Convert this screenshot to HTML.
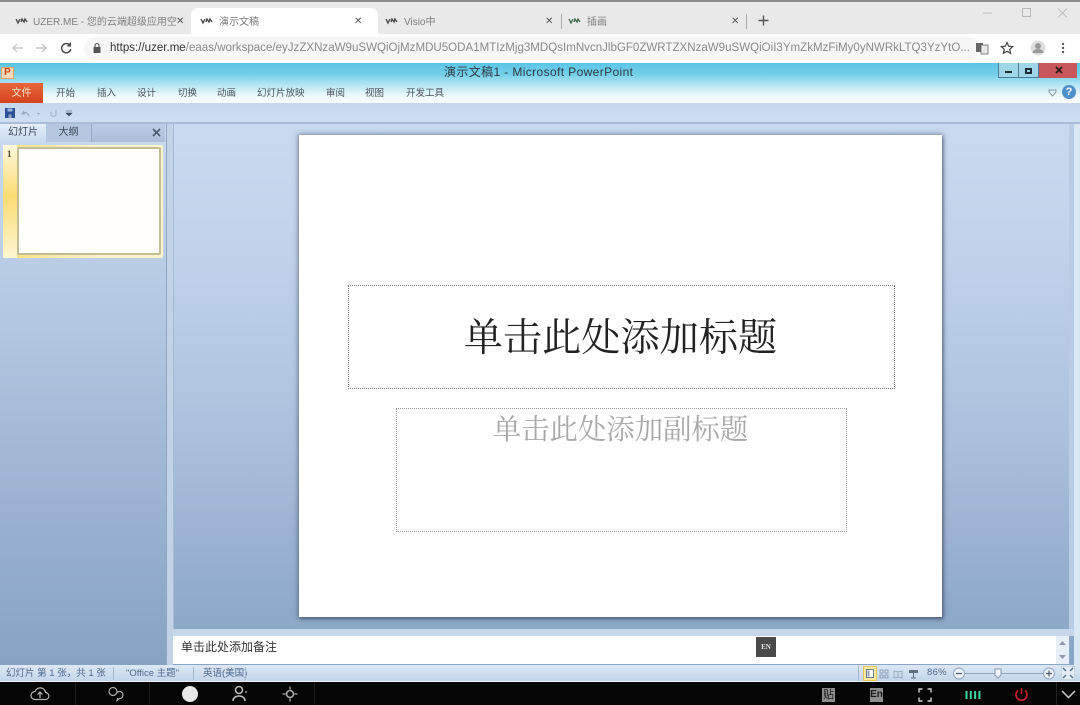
<!DOCTYPE html>
<html lang="zh">
<head>
<meta charset="utf-8">
<title>演示文稿1</title>
<style>
html,body{margin:0;padding:0;width:1080px;height:705px;overflow:hidden;background:#fff}
body{position:relative;font-family:"Liberation Sans","Noto Sans CJK SC",sans-serif;color:#444;filter:blur(.3px)}
.a{position:absolute;white-space:nowrap}
.tab{font-size:10px;color:#808080;top:16px;line-height:13px}
.x{font-size:10px;color:#555;top:14px;line-height:15px}
.rib{font-size:9.5px;color:#4a5260;top:88px;line-height:12px}
.st{font-size:9.5px;color:#50688a;top:668px;line-height:12px}
.logo{top:17px}
</style>
</head>
<body>
<!-- Browser chrome -->
<div class="a" style="left:0;top:0;width:1080px;height:34px;background:#e9e9ea"></div>
<div class="a" style="left:0;top:0;width:1080px;height:2px;background:#8d8d8d"></div>
<div class="a" style="left:191px;top:8px;width:187px;height:26px;background:#fff;border-radius:7px 7px 0 0"></div>
<div class="a" style="left:0;top:34px;width:1080px;height:29px;background:#fff"></div>
<div class="a" style="left:84px;top:37px;width:896px;height:23px;background:#f6f6f7;border-radius:12px"></div>

<svg class="a logo" style="left:15px" width="14" height="8" viewBox="0 0 14 8"><path d="M1 2l2 4 2-4M6 5l1-3 2 3 1-3 2 3" fill="none" stroke="#444" stroke-width="1.3"/></svg>
<div class="a tab" style="left:33px">UZER.ME - 您的云端超级应用空</div>
<div class="a x" style="left:176px">✕</div>
<svg class="a logo" style="left:200px" width="14" height="8" viewBox="0 0 14 8"><path d="M1 2l2 4 2-4M6 5l1-3 2 3 1-3 2 3" fill="none" stroke="#444" stroke-width="1.3"/></svg>
<div class="a tab" style="left:219px;color:#777">演示文稿</div>
<div class="a x" style="left:354px">✕</div>
<svg class="a logo" style="left:385px" width="14" height="8" viewBox="0 0 14 8"><path d="M1 2l2 4 2-4M6 5l1-3 2 3 1-3 2 3" fill="none" stroke="#444" stroke-width="1.3"/></svg>
<div class="a tab" style="left:404px">Visio中</div>
<div class="a x" style="left:545px">✕</div>
<div class="a" style="left:561px;top:14px;width:1px;height:15px;background:#aaa"></div>
<svg class="a logo" style="left:568px" width="14" height="8" viewBox="0 0 14 8"><path d="M1 2l2 4 2-4M6 5l1-3 2 3 1-3 2 3" fill="none" stroke="#3c6a4a" stroke-width="1.3"/></svg>
<div class="a tab" style="left:587px">插画</div>
<div class="a x" style="left:731px">✕</div>
<div class="a" style="left:746px;top:14px;width:1px;height:15px;background:#aaa"></div>
<svg class="a" style="left:757px;top:14px" width="13" height="13" viewBox="0 0 13 13"><path d="M6.5 1.5v10M1.5 6.5h10" stroke="#555" stroke-width="1.4"/></svg>
<!-- window buttons -->
<svg class="a" style="left:980px;top:6px" width="90" height="14" viewBox="0 0 90 14"><path d="M3 7h9" stroke="#c4c4c4" stroke-width="1"/><rect x="42.5" y="2.5" width="8" height="8" fill="none" stroke="#b8b8b8"/><path d="M78 2.5l9 9M87 2.5l-9 9" stroke="#bdbdbd"/></svg>
<!-- nav icons -->
<svg class="a" style="left:10px;top:40px" width="64" height="16" viewBox="0 0 64 16"><path d="M3 8h10M3 8l4-4M3 8l4 4" fill="none" stroke="#bcbcbc" stroke-width="1.2"/><path d="M26 8h10M36 8l-4-4M36 8l-4 4" fill="none" stroke="#bcbcbc" stroke-width="1.2"/><path d="M60 5.5a4.6 4.6 0 1 0 .8 3.5" fill="none" stroke="#444" stroke-width="1.4"/><path d="M61 2v4.500h-4.500z" fill="#444"/></svg>
<svg class="a" style="left:92px;top:42px" width="10" height="12" viewBox="0 0 10 12"><rect x="1.500" y="5" width="7" height="6" fill="#555"/><path d="M3 5V3.500a2 2 0 0 1 4 0V5" fill="none" stroke="#555" stroke-width="1.100"/></svg>
<div class="a" style="left:110px;top:40px;font-size:11.55px;line-height:16px;color:#8a8a8a"><span style="color:#333">https://uzer.me</span>/eaas/workspace/eyJzZXNzaW9uSWQiOjMzMDU5ODA1MTIzMjg3MDQsImNvcnJlbGF0ZWRTZXNzaW9uSWQiOiI3YmZkMzFiMy0yNWRkLTQ3YzYtO...</div>
<svg class="a" style="left:975px;top:41px" width="14" height="14" viewBox="0 0 14 14"><rect x="1" y="2" width="7" height="9" fill="#666"/><rect x="6" y="4" width="7" height="9" fill="#e8e8e8" stroke="#666" stroke-width=".8"/></svg>
<svg class="a" style="left:1000px;top:41px" width="14" height="14" viewBox="0 0 14 14"><path d="M7 1.500l1.700 3.700 4 .4-3 2.700.9 4L7 10.300l-3.600 2 .9-4-3-2.700 4-.4z" fill="none" stroke="#444" stroke-width="1.200"/></svg>
<svg class="a" style="left:1030px;top:40px" width="16" height="16" viewBox="0 0 16 16"><circle cx="8" cy="8" r="7.500" fill="#dedede"/><circle cx="8" cy="6" r="3" fill="#9a9a9a"/><path d="M2.500 13a5.500 4 0 0 1 11 0z" fill="#9a9a9a"/></svg>
<svg class="a" style="left:1061px;top:42px" width="4" height="12" viewBox="0 0 4 12"><circle cx="2" cy="2" r="1.200" fill="#555"/><circle cx="2" cy="6" r="1.200" fill="#555"/><circle cx="2" cy="10" r="1.200" fill="#555"/></svg>

<!-- PowerPoint title & ribbon tabs -->
<div class="a" style="left:0;top:63px;width:1080px;height:40px;background:linear-gradient(#5dc5e6 0,#72cfe9 28%,#b5e5f3 55%,#eef9fc 82%,#fafdfe 100%)"></div>
<div class="a" style="left:1px;top:67px;width:13px;height:12px;background:#f3d9b8;border:1px solid #e1a26f;box-sizing:border-box;color:#c9471f;font-size:10px;font-weight:bold;line-height:10px;text-align:center">P</div>
<div class="a" style="left:444px;top:65px;font-size:12px;letter-spacing:.38px;line-height:15px;color:#2e3a44">演示文稿1 - Microsoft PowerPoint</div>
<div class="a" style="left:998px;top:63px;width:21px;height:15px;border:1px solid #4d7d96;border-top:0;box-sizing:border-box;background:#9ed6e8"></div>
<div class="a" style="left:1019px;top:63px;width:20px;height:15px;border:1px solid #4d7d96;border-top:0;border-left:0;box-sizing:border-box;background:#9ed6e8"></div>
<div class="a" style="left:1039px;top:63px;width:38px;height:15px;background:#c9565c"></div>
<div class="a" style="left:1005px;top:71px;width:7px;height:2px;background:#1e2a36"></div>
<div class="a" style="left:1025px;top:68px;width:7px;height:6px;border:2px solid #1e2a36;box-sizing:border-box"></div>
<svg class="a" style="left:1055px;top:66px" width="8" height="8" viewBox="0 0 8 8"><path d="M1 1l6 6M7 1L1 7" stroke="#2a1a1a" stroke-width="1.800"/></svg>

<div class="a" style="left:0;top:83px;width:43px;height:20px;background:linear-gradient(#e8663a,#d4431c);color:#f6e0c8;font-size:10px;line-height:22px;text-align:center">文件</div>
<div class="a rib" style="left:56px">开始</div>
<div class="a rib" style="left:97px">插入</div>
<div class="a rib" style="left:137px">设计</div>
<div class="a rib" style="left:178px">切换</div>
<div class="a rib" style="left:217px">动画</div>
<div class="a rib" style="left:257px">幻灯片放映</div>
<div class="a rib" style="left:326px">审阅</div>
<div class="a rib" style="left:365px">视图</div>
<div class="a rib" style="left:406px">开发工具</div>
<svg class="a" style="left:1048px;top:89px" width="9" height="8" viewBox="0 0 9 8"><path d="M1 1h7v2L4.500 7 1 3z" fill="none" stroke="#8898a8"/></svg>
<div class="a" style="left:1062px;top:85px;width:14px;height:14px;border-radius:50%;background:#4f8fcb;color:#fff;font-size:11px;font-weight:bold;line-height:14px;text-align:center">?</div>

<!-- Quick access -->
<div class="a" style="left:0;top:103px;width:1080px;height:20px;background:linear-gradient(#c6d7ee,#cfdff3)"></div>
<div class="a" style="left:0;top:122px;width:1080px;height:2px;background:#a9bdd6"></div>
<svg class="a" style="left:4px;top:107px" width="72" height="13" viewBox="0 0 72 13"><rect x="1" y="1" width="10" height="10" fill="#2b4f9a"/><rect x="3.500" y="1.500" width="5" height="3" fill="#9fb4dc"/><rect x="4.500" y="7.500" width="3" height="3.500" fill="#8fa4cc"/><path d="M20 4l-2 3h3M18.500 6.500a4 4 0 0 1 6.500 3" fill="none" stroke="#99a6ba" stroke-width="1.100"/><path d="M33 6h3l-1.500 2z" fill="#9aa6ba"/><path d="M52 3v5a3 3 0 0 1-5 0V5" fill="none" stroke="#a4b0c4" stroke-width="1.100"/><path d="M62 4h6M62 6h6l-3 3z" fill="#3c4a60" stroke="#3c4a60" stroke-width=".6"/></svg>

<!-- Workspace -->
<div class="a" style="left:0;top:124px;width:1080px;height:541px;background:linear-gradient(#c9daf0,#c0d2ea 25%,#a9bfdb 60%,#8fa9c9 90%,#8aa4c5)"></div>

<!-- Left pane -->
<div class="a" style="left:0;top:142px;width:166px;height:523px;background:linear-gradient(#c8d9ee,#b8cce4 25%,#a1b8d5 60%,#87a2c3)"></div>
<div class="a" style="left:0;top:124px;width:165px;height:18px;background:linear-gradient(#bccee5,#a9bdd7)"></div>
<div class="a" style="left:0;top:124px;width:46px;height:18px;background:linear-gradient(#e6eef8,#c8d9ee);color:#3a4656;font-size:10px;line-height:18px;text-align:center">幻灯片</div>
<div class="a" style="left:46px;top:124px;width:46px;height:18px;border-right:1px solid #97abc5;box-sizing:border-box;background:#b5c8e0;color:#3a4656;font-size:10px;line-height:18px;text-align:center">大纲</div>
<svg class="a" style="left:152px;top:128px" width="9" height="9" viewBox="0 0 9 9"><path d="M1 1l7 7M8 1L1 8" stroke="#4b5a6e" stroke-width="1.600"/></svg>
<div class="a" style="left:3px;top:145px;width:160px;height:113px;background:linear-gradient(90deg,#fbe28a 0,#fbe28a 10%,#f9f3cf 60%);border-radius:2px"></div>
<div class="a" style="left:3px;top:145px;width:14px;height:113px;background:linear-gradient(#fdf8dc,#fbdc74 45%,#fdf6d0)"></div>
<div class="a" style="left:7px;top:149px;font:bold 9px/11px 'Liberation Serif',serif;color:#4a4a30">1</div>
<div class="a" style="left:17px;top:147px;width:144px;height:108px;box-sizing:border-box;background:#fffefb;border:2px solid #c3bd94;border-radius:2px"></div>
<!-- splitter -->
<div class="a" style="left:166px;top:124px;width:1px;height:541px;background:#8fa5c2"></div>
<div class="a" style="left:167px;top:124px;width:6px;height:541px;background:#c2d3e8"></div>
<div class="a" style="left:173px;top:124px;width:1px;height:505px;background:#a6bad4"></div>
<!-- right scroll strip -->
<div class="a" style="left:1069px;top:124px;width:5px;height:505px;background:#b9cce3"></div>
<div class="a" style="left:1074px;top:124px;width:6px;height:541px;background:#dbe6f3"></div>

<!-- Slide -->
<div class="a" style="left:299px;top:135px;width:643px;height:482px;background:#fff;box-shadow:0 0 5px 1px rgba(60,75,100,.55),1px 2px 3px rgba(50,60,80,.5)"></div>
<div class="a" style="left:348px;top:285px;width:547px;height:104px;box-sizing:border-box;border:1px dotted #777"></div>
<div class="a" style="left:347px;top:312px;width:547px;text-align:center;font-family:'Liberation Serif','Noto Serif CJK SC',serif;font-size:39.2px;line-height:54px;color:#222">单击此处添加标题</div>
<div class="a" style="left:396px;top:408px;width:451px;height:124px;box-sizing:border-box;border:1px dotted #999"></div>
<div class="a" style="left:395px;top:411px;width:451px;text-align:center;font-family:'Liberation Serif','Noto Serif CJK SC',serif;font-size:28.4px;line-height:40px;color:#a8a8a8">单击此处添加副标题</div>

<!-- Notes -->
<div class="a" style="left:173px;top:629px;width:901px;height:7px;background:#c6d7ec"></div>
<div class="a" style="left:173px;top:636px;width:883px;height:28px;background:#fff"></div>
<div class="a" style="left:1056px;top:636px;width:13px;height:28px;background:#e6eef8"></div>
<svg class="a" style="left:1058px;top:640px" width="9" height="22" viewBox="0 0 9 22"><path d="M1 5l3.500-4L8 5zM1 15l3.500 4L8 15z" fill="#8e9bad"/></svg>
<div class="a" style="left:181px;top:640px;font-size:12px;line-height:15px;color:#333">单击此处添加备注</div>
<div class="a" style="left:756px;top:637px;width:20px;height:20px;background:#4a4a4a;color:#e4e4e4;font:bold 7px/20px 'Liberation Serif',serif;text-align:center">EN</div>

<!-- Status bar -->
<div class="a" style="left:0;top:665px;width:1080px;height:16px;background:linear-gradient(#dce7f5,#c4d5ea)"></div>
<div class="a" style="left:0;top:681px;width:1080px;height:1px;background:#eef2f7"></div>
<div class="a st" style="left:6px">幻灯片 第 1 张，共 1 张</div>
<div class="a" style="left:113px;top:667px;width:1px;height:13px;background:#a8bad0"></div>
<div class="a st" style="left:126px">"Office 主题"</div>
<div class="a" style="left:193px;top:667px;width:1px;height:13px;background:#a8bad0"></div>
<div class="a st" style="left:203px">英语(美国)</div>
<div class="a" style="left:245px;top:667px;width:1px;height:13px;background:#a8bad0"></div>
<div class="a" style="left:858px;top:666px;width:1px;height:15px;background:#a8bad0"></div>
<div class="a" style="left:863px;top:666px;width:14px;height:15px;box-sizing:border-box;background:#fbe9a0;border:1px solid #e4c75a"></div>
<svg class="a" style="left:866px;top:669px" width="54" height="10" viewBox="0 0 54 10"><rect x=".5" y=".5" width="7" height="8" fill="#fff" stroke="#6b7d92"/><rect x="1.500" y="1.500" width="2" height="6" fill="#8ea0b6"/><path d="M14 1h3v3h-3zM19 1h3v3h-3zM14 6h3v3h-3zM19 6h3v3h-3z" fill="none" stroke="#7d90a8" stroke-width=".8"/><path d="M28 2l4 1 4-1v7l-4-1-4 1zM32 3v5" fill="none" stroke="#8ea0b6" stroke-width=".8"/><path d="M43 1h9v3h-9z" fill="#5c6e84"/><path d="M47.500 4v5M45 9h5" stroke="#5c6e84"/></svg>
<div class="a" style="left:927px;top:667px;font-size:9.5px;letter-spacing:.3px;line-height:12px;color:#50688a">86%</div>
<svg class="a" style="left:952px;top:666px" width="104" height="15" viewBox="0 0 104 15"><path d="M12 7.500h85" stroke="#8fa3bc"/><circle cx="7" cy="7.500" r="5.500" fill="#eaf1f9" stroke="#8fa3bc"/><path d="M4 7.500h6" stroke="#4a5a70" stroke-width="1.200"/><path d="M43 3h6v6l-3 3-3-3z" fill="#f2f6fb" stroke="#8496ae"/><circle cx="97" cy="7.500" r="5.500" fill="#eaf1f9" stroke="#8fa3bc"/><path d="M94 7.500h6M97 4.500v6" stroke="#4a5a70" stroke-width="1.200"/></svg>
<svg class="a" style="left:1061px;top:666px" width="14" height="14" viewBox="0 0 14 14"><rect width="14" height="14" fill="#e2ebf6" stroke="#a3b5cb" stroke-width=".8"/><path d="M2 2l3 3M12 2L9 5M2 12l3-3M12 12L9 9" stroke="#5d7793" stroke-width="1.500"/></svg>

<!-- Bottom toolbar -->
<div class="a" style="left:0;top:682px;width:1080px;height:23px;background:#050505"></div>
<div class="a" style="left:75px;top:682px;width:1px;height:23px;background:#1c1c1c"></div>
<div class="a" style="left:149px;top:682px;width:1px;height:23px;background:#1c1c1c"></div>
<div class="a" style="left:314px;top:682px;width:1px;height:23px;background:#1c1c1c"></div>
<div class="a" style="left:1056px;top:682px;width:1px;height:23px;background:#222"></div>
<svg class="a" style="left:30px;top:685px" width="20" height="17" viewBox="0 0 20 17"><path d="M5 14.500h10a3.500 3.500 0 0 0 .6-7A5.500 5.500 0 0 0 5 6.500a4 4 0 0 0 0 8z" fill="none" stroke="#b5b5b5" stroke-width="1.200"/><path d="M10 13V7M7.500 9.500L10 7l2.500 2.500" fill="none" stroke="#b5b5b5" stroke-width="1.200"/></svg>
<svg class="a" style="left:107px;top:686px" width="18" height="16" viewBox="0 0 18 16"><circle cx="6" cy="5.500" r="4" fill="none" stroke="#aaa" stroke-width="1.200"/><path d="M9 8.500a3.500 3.500 0 1 1 3.500 4L10 14.500l.6-2.500" fill="none" stroke="#aaa" stroke-width="1.200"/></svg>
<div class="a" style="left:182px;top:686px;width:16px;height:16px;border-radius:50%;background:#e8e8e8"></div>
<svg class="a" style="left:231px;top:685px" width="18" height="18" viewBox="0 0 18 18"><circle cx="8" cy="5" r="3.500" fill="none" stroke="#bbb" stroke-width="1.600"/><path d="M2 16c0-3 2.500-5 6-5s6 2 6 5" fill="none" stroke="#bbb" stroke-width="1.600"/><circle cx="15" cy="7" r="1" fill="#999"/></svg>
<svg class="a" style="left:281px;top:685px" width="18" height="18" viewBox="0 0 18 18"><circle cx="9" cy="9" r="3.500" fill="none" stroke="#aaa" stroke-width="1.600"/><path d="M9 1.500v3M9 13.500v3M1.500 9h3M13.500 9h3" stroke="#aaa" stroke-width="1.300"/></svg>
<div class="a" style="left:822px;top:688px;width:13px;height:14px;background:#8d8d8d;color:#1a1a1a;font-size:11px;line-height:14px;text-align:center">贴</div>
<div class="a" style="left:870px;top:688px;width:13px;height:14px;background:#8d8d8d;color:#1a1a1a;font-size:10px;font-weight:bold;line-height:14px;text-align:center">En</div>
<svg class="a" style="left:918px;top:688px" width="14" height="14" viewBox="0 0 14 14"><path d="M1 4.500V1h3.500M9.500 1H13v3.500M13 9.500V13H9.500M4.500 13H1V9.500" fill="none" stroke="#d0d0d0" stroke-width="1.400"/></svg>
<svg class="a" style="left:965px;top:691px" width="17" height="8" viewBox="0 0 17 8"><path d="M1.500 0v8M5.800 0v8M10.100 0v8M14.400 0v8" stroke="#3fd3a0" stroke-width="2"/></svg>
<svg class="a" style="left:1014px;top:687px" width="15" height="15" viewBox="0 0 15 15"><path d="M4 3.500a5.500 5.500 0 1 0 7 0M7.500 1v6" fill="none" stroke="#c2202c" stroke-width="1.700"/></svg>
<svg class="a" style="left:1061px;top:690px" width="15" height="9" viewBox="0 0 15 9"><path d="M1 1l6.500 6.500L14 1" fill="none" stroke="#bdbdbd" stroke-width="1.600"/></svg>
</body>
</html>
